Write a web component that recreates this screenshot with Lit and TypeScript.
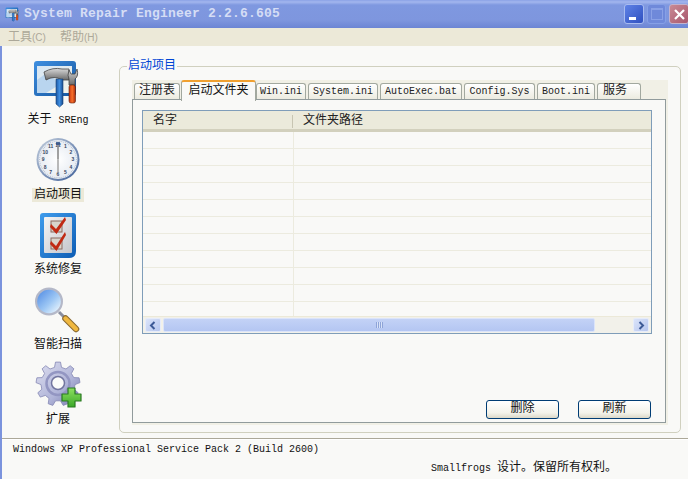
import { LitElement, html, css, svg } from "lit";
import { customElement } from "lit/decorators.js";

const gearPath = (cx: number, cy: number, r1: number, r2: number, n: number) => {
  const pts: string[] = [];
  for (let i = 0; i < n; i++) {
    const a = (i / n) * Math.PI * 2 - Math.PI / 2;
    const s = (Math.PI * 2) / n;
    const p = (r: number, t: number) => `${(cx + r * Math.cos(a + t * s)).toFixed(1)},${(cy + r * Math.sin(a + t * s)).toFixed(1)}`;
    pts.push(p(r2, -0.16), p(r2, 0.16), p(r1, 0.3), p(r1, 0.7));
  }
  return pts.join(" ");
};

const toolsIcon = svg`
  <defs>
    <linearGradient id="tw" x1="0" y1="0" x2="1" y2="1"><stop offset="0" stop-color="#3f8fe0"/><stop offset="1" stop-color="#15569f"/></linearGradient>
    <linearGradient id="tm" x1="0" y1="0" x2="1" y2="1"><stop offset="0" stop-color="#d6e6f4"/><stop offset="1" stop-color="#f4f4ea"/></linearGradient>
    <linearGradient id="th" x1="0" y1="0" x2="1" y2="0"><stop offset="0" stop-color="#1c5aa8"/><stop offset=".5" stop-color="#3f8ee0"/><stop offset="1" stop-color="#174c90"/></linearGradient>
    <linearGradient id="tr" x1="0" y1="0" x2="1" y2="0"><stop offset="0" stop-color="#c43410"/><stop offset=".5" stop-color="#f8702a"/><stop offset="1" stop-color="#a82a0c"/></linearGradient>
    <linearGradient id="tg" x1="0" y1="0" x2="0" y2="1"><stop offset="0" stop-color="#d8d8d8"/><stop offset="1" stop-color="#6a6a6a"/></linearGradient>
  </defs>
  <rect x="2" y="2" width="42" height="35" rx="3" fill="url(#tw)"/>
  <rect x="5" y="7" width="35" height="27" fill="url(#tm)"/>
  <path d="M5 21 L17 12 L27 26 L14 34 L5 34Z" fill="#b9d5ef"/>
  <path d="M12 13 Q21 8 30 10 L37 10 L37 21 L30 21 Q22 16 14 21 Z" fill="url(#tg)" stroke="#444" stroke-width=".8"/>
  <path d="M24 20 L31 20 L31 45 L27.5 48 L24 45Z" fill="url(#th)" stroke="#1b3f70" stroke-width=".6"/>
  <path d="M37 11 Q35 17 37 20 L37 26 L43 26 L43 20 Q47 17 45 10 L43 15 L39 15Z" fill="url(#tg)" stroke="#444" stroke-width=".8"/>
  <rect x="37" y="26" width="6.5" height="18" rx="2" fill="url(#tr)" stroke="#5e1e08" stroke-width=".6"/>
`;

const clockIcon = svg`
  <defs>
    <linearGradient id="cr" x1="0" y1="0" x2="1" y2="1"><stop offset="0" stop-color="#c4cfdd"/><stop offset="1" stop-color="#3e5f98"/></linearGradient>
    <radialGradient id="cf"><stop offset="0" stop-color="#ffffff"/><stop offset="1" stop-color="#e6ebf2"/></radialGradient>
  </defs>
  <circle cx="26" cy="25.5" r="21.5" fill="url(#cr)"/>
  <circle cx="26" cy="25.5" r="19.5" fill="url(#cf)"/>
  ${Array.from({ length: 12 }, (_, i) => {
    const a = ((i + 1) / 12) * Math.PI * 2 - Math.PI / 2;
    return svg`<text x=${26 + 14.8 * Math.cos(a)} y=${27.3 + 14.8 * Math.sin(a)} font-size="5" font-weight="700" text-anchor="middle" font-family="Liberation Sans, sans-serif" fill="#33455f">${i + 1}</text>`;
  })}
  ${Array.from({ length: 60 }, (_, i) => {
    const a = (i / 60) * Math.PI * 2;
    return svg`<circle cx=${26 + 18.3 * Math.cos(a)} cy=${25.5 + 18.3 * Math.sin(a)} r=".45" fill="#8b9ab2"/>`;
  })}
  <rect x="25.2" y="8.5" width="1.6" height="17" fill="#8a8a8a"/>
  <rect x="25.2" y="25.5" width="1.6" height="13" fill="#a8a8a8"/>
  <rect x="24" y="8" width="4" height="3" fill="#2c4f8a" opacity=".8"/>
`;

const checkIcon = svg`
  <defs>
    <linearGradient id="kb" x1="0" y1="0" x2="1" y2="1"><stop offset="0" stop-color="#3f9cec"/><stop offset="1" stop-color="#0e5db4"/></linearGradient>
    <linearGradient id="kp" x1="0" y1="0" x2="1" y2="1"><stop offset="0" stop-color="#f4f4f4"/><stop offset="1" stop-color="#c4c6cc"/></linearGradient>
  </defs>
  <path d="M11 4 L41 4 Q44 4 44 7 L44 42 Q44 49 37 49 L11 49 Q8 49 8 46 L8 7 Q8 4 11 4Z" fill="url(#kb)"/>
  <rect x="12" y="8" width="28" height="36" rx="1" fill="url(#kp)"/>
  <rect x="19" y="12" width="11" height="11" fill="#d8d4cc" stroke="#8a6a60"/>
  <rect x="19" y="29" width="11" height="11" fill="#d8d4cc" stroke="#8a6a60"/>
  <path d="M19 15 L24 20 L33 8 L34 11 L24.5 25 L18 18Z" fill="#c02a14"/>
  <path d="M19 32 L24 37 L33 23 L34 26 L24.5 42 L18 35Z" fill="#c02a14"/>
`;

const lensIcon = svg`
  <defs>
    <linearGradient id="lg" x1=".1" y1=".1" x2=".9" y2=".9"><stop offset="0" stop-color="#5c94e6"/><stop offset=".55" stop-color="#9cc6f4"/><stop offset="1" stop-color="#e4f2fc"/></linearGradient>
    <linearGradient id="lh" x1="0" y1="0" x2="1" y2="0"><stop offset="0" stop-color="#ffd870"/><stop offset="1" stop-color="#d88c10"/></linearGradient>
  </defs>
  <path d="M27 28 L33 34" stroke="#8a8fa0" stroke-width="3"/>
  <path d="M33.5 34.5 L44 45" stroke="#8a6a30" stroke-width="6.5" stroke-linecap="round"/>
  <path d="M33.5 34.5 L44 45" stroke="#f0b840" stroke-width="4.4" stroke-linecap="round"/>
  <circle cx="17" cy="17.5" r="14" fill="#b4b8c8"/>
  <circle cx="17" cy="17.5" r="11.8" fill="url(#lg)"/>
`;

const gearIcon = svg`
  <defs>
    <linearGradient id="gg" x1="0" y1="0" x2="1" y2="1"><stop offset="0" stop-color="#dedff0"/><stop offset=".6" stop-color="#b0b4d8"/><stop offset="1" stop-color="#7275aa"/></linearGradient>
    <linearGradient id="gp" x1="0" y1="0" x2="0" y2="1"><stop offset="0" stop-color="#8ee060"/><stop offset="1" stop-color="#3ba828"/></linearGradient>
  </defs>
  <polygon points=${gearPath(26, 25, 17, 22, 9)} fill="url(#gg)" stroke="#8588b4" stroke-width=".8" stroke-linejoin="round"/>
  <circle cx="26" cy="24.5" r="11.5" fill="none" stroke="#9396c2" stroke-width="2.5"/>
  <circle cx="26" cy="24" r="6.5" fill="#fbfbf9" stroke="#72759f" stroke-width="1.5"/>
  <path d="M36 29 H43 V35 H49 V42 H43 V48 H36 V42 H30 V35 H36Z" fill="url(#gp)" stroke="#2a7a22" stroke-width="1.2" stroke-linejoin="round"/>
`;

const NAV = [
  { label: html`关于 <small>SREng</small>`, icon: toolsIcon, active: false },
  { label: "启动项目", icon: clockIcon, active: true },
  { label: "系统修复", icon: checkIcon, active: false },
  { label: "智能扫描", icon: lensIcon, active: false },
  { label: "扩展", icon: gearIcon, active: false },
];

const TABS = [
  { t: "注册表", w: 46 },
  { t: "启动文件夹", w: 75, active: true },
  { t: "Win.ini", w: 50 },
  { t: "System.ini", w: 70 },
  { t: "AutoExec.bat", w: 82 },
  { t: "Config.Sys", w: 71 },
  { t: "Boot.ini", w: 58 },
  { t: "服务", w: 44, short: true },
];

@customElement("app-root")
export class AppRoot extends LitElement {
  static styles = css`
    :host {
      display: block;
      width: 688px;
      height: 479px;
      overflow: hidden;
      font-family: "Liberation Mono", "Noto Sans CJK SC", monospace;
      font-size: 12px;
      color: #111;
    }
    .win { display: flex; flex-direction: column; width: 688px; height: 479px; background: #f9f9f7; }
    .title {
      height: 28px; flex: none; display: flex; align-items: center; padding-left: 5px;
      background: linear-gradient(#8ba2e6 0, #a3b6ee 2px, #7f98e0 5px, #7e96de 20px, #6c85d4 28px);
    }
    .title svg.app { width: 15px; height: 15px; flex: none; }
    .title .name {
      margin-left: 4px; flex: 1; font-size: 13px; font-weight: 700; letter-spacing: .2px; color: #d5ddf5; line-height: 28px;
    }
    .wb { width: 20px; height: 20px; box-sizing: border-box; border-radius: 3px; border: 1px solid #a8bbf0; margin-right: 3px; flex: none; display: flex; align-items: center; justify-content: center; }
    .wb.min { background: linear-gradient(135deg, #5f82e6, #2f50c0); }
    .wb.min i { display: block; width: 7px; height: 3px; background: #fff; margin-top: 9px; margin-right: 3px; }
    .wb.max { background: #6f89da; border-color: #86a0e6; width: 19px; }
    .wb.max i { display: block; width: 10px; height: 9px; border: 1px solid #8aa1e6; border-top-width: 2px; }
    .wb.close { background: linear-gradient(135deg, #c98a94, #a8586e); border-color: #c3b2cc; margin-right: -1px; }
    .wb.close svg { width: 13px; height: 13px; }
    .frame { flex: 1; display: flex; flex-direction: column; border-left: 2px solid #7b93dd; min-height: 0; }
    .menu { box-sizing: border-box; height: 18px; flex: none; margin-left: -2px; padding: 1px 0 0 8px; background: #ece9d8; display: flex; gap: 14px; color: #aca899; line-height: 18px; font-size: 12px; }
    .menu small { font-family: "Liberation Sans", sans-serif; font-size: 10px; }
    .main { height: 392px; flex: none; display: flex; }
    .side { width: 110px; flex: none; padding-top: 13px; display: flex; flex-direction: column; align-items: center; }
    .nav { height: 75px; display: flex; flex-direction: column; align-items: center; }
    .nav svg { width: 50px; height: 50px; display: block; flex: none; }
    .nav span { margin: 4px 0 0 2px; height: 14px; line-height: 14px; padding: 0 2px; white-space: nowrap; font-size: 12px; }
    .nav small { font-size: 10px; }
    .nav.on span { background: #ece9d8; }
    .group {
      position: relative; box-sizing: border-box; width: 562px; height: 367px; margin: 20px 0 0 7px;
      border: 1px solid #d0d0bf; border-radius: 5px; padding: 13px 0 0 12px;
    }
    .legend { position: absolute; left: 7px; top: -8px; padding: 0 1px; background: #f9f9f7; color: #0046d5; line-height: 14px; font-size: 12px; }
    .tabs { width: 536px; height: 345px; background: #f1f0e6; display: flex; flex-direction: column; }
    .strip { height: 19px; flex: none; display: flex; gap: 2px; padding-left: 2px; align-items: flex-end; }
    .tab {
      box-sizing: border-box; height: 16px; flex: none; border: 1px solid #a2a89f; border-bottom: 0; border-radius: 3px 3px 0 0;
      background: linear-gradient(#fff, #ecebe0); text-align: center; line-height: 15px; font-size: 10px; color: #222; white-space: nowrap;
    }
    .tab.cjk { font-size: 12px; }
    .tab.short { text-align: left; padding-left: 5px; }
    .tab.on {
      position: relative; z-index: 1; height: 21px; margin: 0 -2px -2px -1px; background: #f9f9f7; border-color: #a2a89f;
      border-top: 2px solid #f0a030; font-size: 12px; line-height: 18px; color: #111;
    }
    .pane {
      box-sizing: border-box; width: 534px; height: 324px; flex: none; background: #f9f9f7; border: 1px solid #919b9c;
      padding: 10px 14px 3px 9px; display: flex; flex-direction: column;
    }
    .table { box-sizing: border-box; width: 510px; height: 224px; flex: none; border: 1px solid #7f9db9; display: flex; flex-direction: column; }
    .head { height: 21px; flex: none; box-sizing: border-box; padding-top: 3px; background: #ebeadb; border-bottom: 3px solid #d2d0bd; display: flex; align-items: center; font-size: 12px; color: #222; }
    .head div { padding-left: 10px; }
    .head .c1 { width: 150px; box-sizing: border-box; flex: none; border-right: 1px solid #c7c5b2; height: 13px; line-height: 13px; }
    .head .c2 { height: 13px; line-height: 13px; }
    .rows { flex: 1; min-height: 0; overflow: hidden; border-bottom: 1px solid #ece9d8; }
    .row { height: 17px; box-sizing: border-box; border-bottom: 1px solid #ecebdf; }
    .row div { box-sizing: border-box; width: 151px; height: 16px; border-right: 1px solid #ecebdf; }
    .sb { height: 16px; flex: none; display: flex; align-items: center; background: #f2f1ea; padding: 0 1px; }
    .sbtn { box-sizing: border-box; width: 16px; height: 14px; flex: none; margin: 0 1px; border: 1px solid #e6ecfa; border-radius: 2px; background: linear-gradient(135deg, #dbe4fa, #b6c6ee); display: flex; align-items: center; justify-content: center; }
    .sbtn svg { width: 8px; height: 9px; }
    .thumb { box-sizing: border-box; width: 432px; height: 14px; flex: none; margin-left: 1px; background: linear-gradient(#c3d2f6, #b4c6f2); border: 1px solid #dbe4fa; border-radius: 2px; display: flex; align-items: center; justify-content: center; }
    .grip { width: 7px; height: 6px; background: repeating-linear-gradient(90deg, #8ea4d8 0 1px, #d8e2f8 1px 2px); }
    .spacer { flex: 1; }
    .btns { display: flex; justify-content: flex-end; gap: 19px; }
    .btn {
      box-sizing: border-box; width: 73px; height: 19px; border: 1px solid #003c74; border-radius: 3px;
      background: linear-gradient(#fff, #f3f2ea 70%, #dcd8c8); text-align: center; line-height: 17px; font-size: 12px; color: #111;
    }
    .status { flex: 1; min-height: 0; border-top: 1px solid #aca899; font-size: 10px; line-height: 14px; color: #111; box-shadow: inset 0 1px 0 #fff; display: flex; flex-direction: column; }
    .status .a { padding: 4px 0 0 11px; white-space: nowrap; }
    .status .b { padding: 4px 0 0 429px; white-space: nowrap; }
    .status .b em { font-style: normal; font-size: 12px; }
  `;

  render() {
    return html`
      <div class="win">
        <div class="title">
          <svg class="app" viewBox="0 0 50 50">${toolsIcon}</svg>
          <div class="name">System Repair Engineer 2.2.6.605</div>
          <div class="wb min"><i></i></div>
          <div class="wb max"><i></i></div>
          <div class="wb close"><svg viewBox="0 0 13 13"><path d="M2 2 L11 11 M11 2 L2 11" stroke="#fff" stroke-width="2.2"/></svg></div>
        </div>
        <div class="frame">
          <div class="menu"><span>工具<small>(C)</small></span><span>帮助<small>(H)</small></span></div>
          <div class="main">
            <div class="side">
              ${NAV.map(
                (n) => html`<div class="nav ${n.active ? "on" : ""}">
                  <svg viewBox="0 0 50 50">${n.icon}</svg>
                  <span>${n.label}</span>
                </div>`
              )}
            </div>
            <div class="group">
              <div class="legend">启动项目</div>
              <div class="tabs">
                <div class="strip">
                  ${TABS.map(
                    (t) => html`<div class="tab ${t.active ? "on" : ""} ${/[^\x00-\x7f]/.test(t.t) ? "cjk" : ""} ${t.short ? "short" : ""}" style="width:${t.w}px">${t.t}</div>`
                  )}
                </div>
                <div class="pane">
                  <div class="table">
                    <div class="head"><div class="c1">名字</div><div class="c2">文件夹路径</div></div>
                    <div class="rows">${Array.from({ length: 11 }, () => html`<div class="row"><div></div></div>`)}</div>
                    <div class="sb">
                      <div class="sbtn"><svg viewBox="0 0 8 9"><path d="M5.5 1 L2 4.5 L5.5 8" fill="none" stroke="#3d5a96" stroke-width="2"/></svg></div>
                      <div class="thumb"><div class="grip"></div></div>
                      <div class="spacer"></div>
                      <div class="sbtn"><svg viewBox="0 0 8 9"><path d="M2.5 1 L6 4.5 L2.5 8" fill="none" stroke="#3d5a96" stroke-width="2"/></svg></div>
                    </div>
                  </div>
                  <div class="spacer"></div>
                  <div class="btns"><div class="btn">删除</div><div class="btn">刷新</div></div>
                </div>
              </div>
            </div>
          </div>
          <div class="status">
            <div class="a">Windows XP Professional Service Pack 2 (Build 2600)</div>
            <div class="b">Smallfrogs <em>设计。保留所有权利。</em></div>
          </div>
        </div>
      </div>
    `;
  }
}
